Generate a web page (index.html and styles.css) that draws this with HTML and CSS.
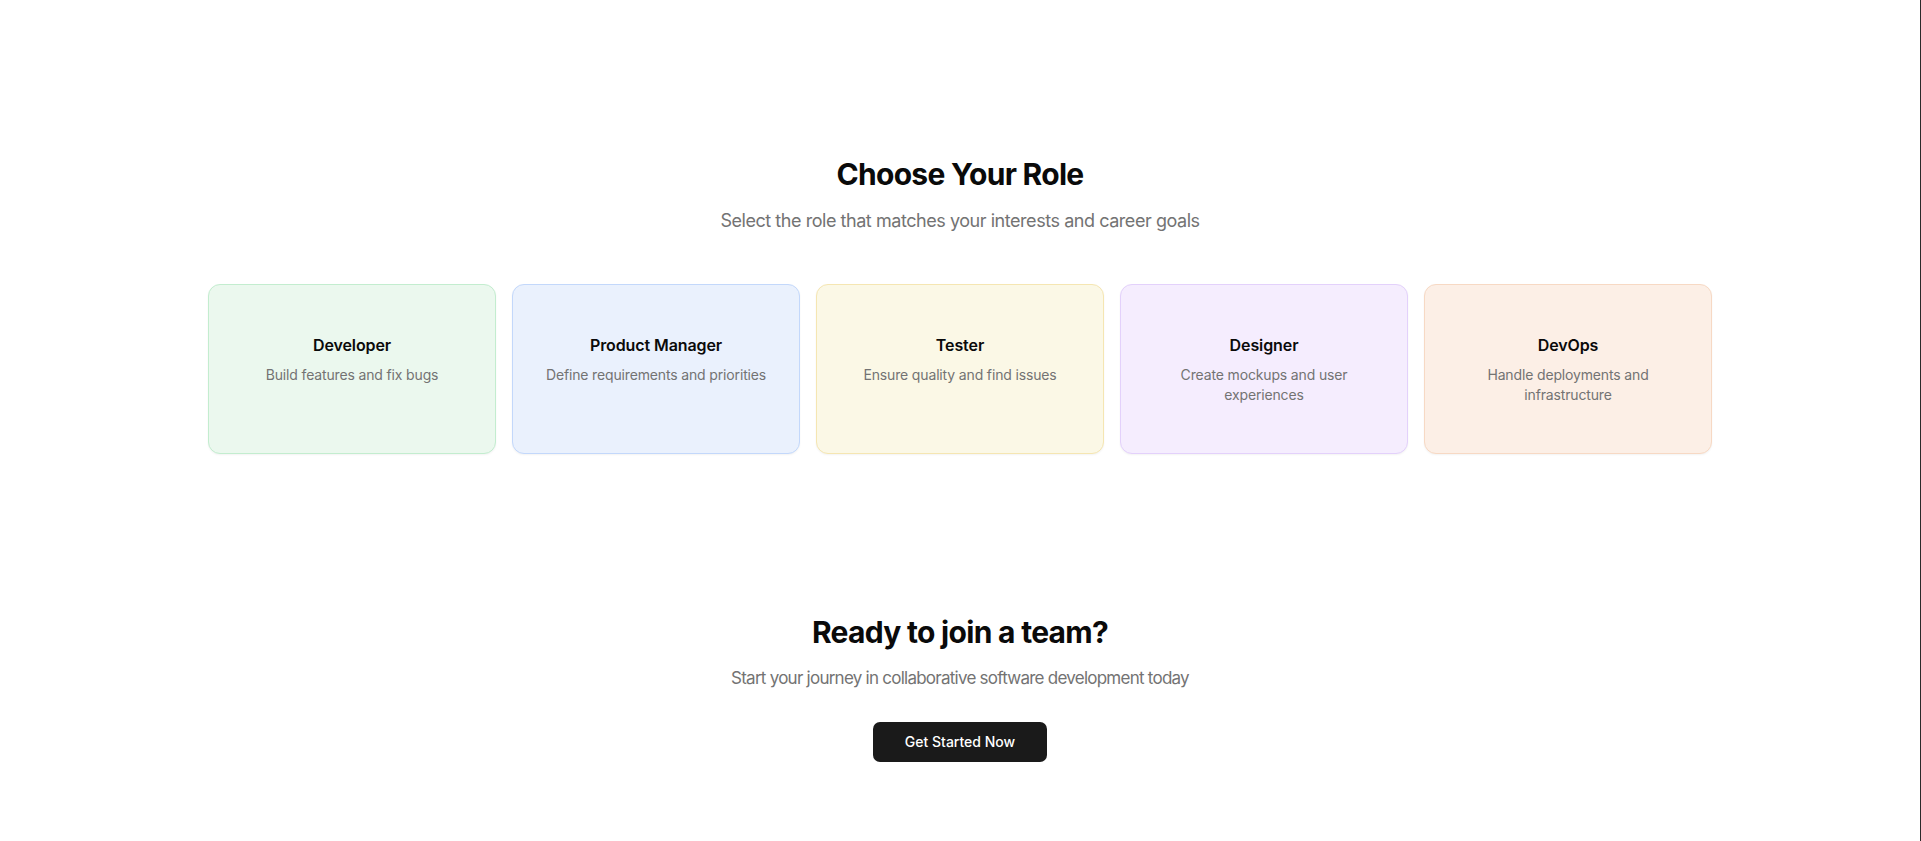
FILE: index.html
```html
<!DOCTYPE html>
<html lang="en">
<head>
<meta charset="utf-8">
<title>Choose Your Role</title>
<link rel="stylesheet" href="styles.css">
</head>
<body>
<div class="page">
  <section class="roles">
    <h1 class="title">Choose Your Role</h1>
    <p class="subtitle">Select the role that matches your interests and career goals</p>
    <div class="grid">
      <div class="card green">
        <h3 class="card-title">Developer</h3>
        <p class="card-text">Build features and fix bugs</p>
      </div>
      <div class="card blue">
        <h3 class="card-title">Product Manager</h3>
        <p class="card-text">Define requirements and priorities</p>
      </div>
      <div class="card yellow">
        <h3 class="card-title">Tester</h3>
        <p class="card-text">Ensure quality and find issues</p>
      </div>
      <div class="card purple">
        <h3 class="card-title">Designer</h3>
        <p class="card-text">Create mockups and user experiences</p>
      </div>
      <div class="card orange">
        <h3 class="card-title">DevOps</h3>
        <p class="card-text">Handle deployments and infrastructure</p>
      </div>
    </div>
  </section>
  <section class="cta">
    <h2 class="title">Ready to join a team?</h2>
    <p class="subtitle cta-sub">Start your journey in collaborative software development today</p>
    <button class="btn">Get Started Now</button>
  </section>
</div>
</body>
</html>
```

FILE: styles.css
```css
* { box-sizing: border-box; }
html, body { margin: 0; padding: 0; background: #ffffff; }
body {
  font-family: Inter, "Noto Sans", "Liberation Sans", sans-serif;
  color: #0a0a0a;
  -webkit-font-smoothing: antialiased;
}
.page {
  width: 1920px;
  min-height: 841px;
  border-right: 1px solid #2a2a2a;
  box-sizing: content-box;
}
.roles {
  max-width: 1536px;
  margin: 0 auto;
  padding: 156px 16px 0;
  text-align: center;
}
.title {
  margin: 0 0 15px;
  font-size: 30px;
  line-height: 36px;
  font-weight: 700;
  letter-spacing: -0.7px;
  color: #0a0a0a;
}
.subtitle {
  margin: 0 0 49px;
  font-size: 18px;
  line-height: 28px;
  letter-spacing: -0.45px;
  color: #737373;
}
.grid {
  display: grid;
  grid-template-columns: repeat(5, 1fr);
  gap: 16px;
}
.card {
  border: 1px solid;
  border-radius: 12px;
  padding: 48px 24px 46px;
  min-height: 170px;
  box-shadow: 0 1px 2px rgba(0,0,0,0.05);
}
.card-title {
  margin: 0 0 8px;
  font-size: 16px;
  line-height: 24px;
  font-weight: 600;
  letter-spacing: -0.1px;
  color: #0a0a0a;
}
.card-text {
  margin: 0;
  font-size: 14px;
  line-height: 20px;
  letter-spacing: -0.15px;
  color: #737373;
}
.green { background: #ebf8ee; border-color: #c3edcf; }
.blue { background: #eaf1fd; border-color: #c3d8fb; }
.yellow { background: #fbf8e6; border-color: #f5e6b2; }
.purple { background: #f5edfe; border-color: #e3d1fb; }
.orange { background: #fcefe6; border-color: #f7d9c4; }
.cta {
  padding-top: 160px;
  padding-bottom: 79px;
  text-align: center;
}
.cta .title { margin-bottom: 14px; }
.cta-sub {
  margin-bottom: 30px;
  font-size: 17px;
  letter-spacing: -0.75px;
}
.btn {
  height: 40px;
  padding: 0 32px;
  border: none;
  border-radius: 7px;
  background: #1a1a1a;
  color: #ffffff;
  font-family: Inter, "Noto Sans", "Liberation Sans", sans-serif;
  font-size: 14px;
  font-weight: 500;
  line-height: 20px;
  cursor: pointer;
}
```
